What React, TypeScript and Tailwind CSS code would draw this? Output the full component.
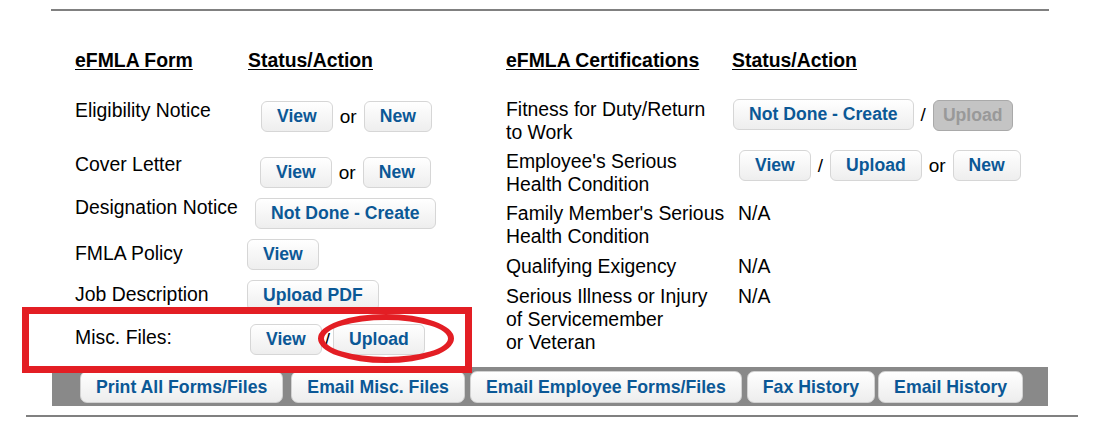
import React from "react";

type Btn = { label: string; disabled?: boolean };

function ActionButton({ label, disabled }: Btn) {
  if (disabled) {
    return (
      <span className="inline-flex h-[31px] items-center rounded-[6px] border border-[#a9a9a9] bg-[#c4c4c4] px-[9px] text-[17.6px] font-bold text-[#999999]">
        {label}
      </span>
    );
  }
  return (
    <span className="inline-flex h-[31px] items-center rounded-[6px] border border-[#d6d6d6] bg-linear-to-b from-white to-[#eeeeee] px-[15px] text-[17.6px] font-bold text-[#0b5896]">
      {label}
    </span>
  );
}

function Sep({ text, tight }: { text: string; tight?: boolean }) {
  return <span className={tight ? "mx-[3px] text-[19px]" : "mx-[7px] text-[19px]"}>{text}</span>;
}

function ToolButton({ label, className }: { label: string; className?: string }) {
  return (
    <span
      className={
        "inline-flex h-[32px] items-center rounded-[7px] border border-[#d2d2d2] bg-linear-to-b from-white to-[#ededed] px-[15px] text-[17.7px] font-bold text-[#0b5896] " +
        (className || "")
      }
    >
      {label}
    </span>
  );
}

export default function App() {
  return (
    <div className="relative h-[423px] w-[1118px] overflow-hidden bg-white font-['Liberation_Sans',Arial,sans-serif] text-black">
      {/* top rule */}
      <div className="ml-[51px] mt-[9px] h-[2px] w-[998px] bg-[#808080]" />

      {/* two tables */}
      <div className="flex h-[356px] pt-[38px] leading-[23px]">
        {/* eFMLA Form */}
        <div className="w-[506px] shrink-0 pl-[75px] text-[19.4px]">
          <div className="flex h-[50px] font-bold underline underline-offset-[2px]">
            <div className="w-[173px]">eFMLA Form</div>
            <div>Status/Action</div>
          </div>

          <div className="flex h-[54px] items-start">
            <div className="w-[172px]">Eligibility Notice</div>
            <div className="ml-[14px] mt-[2px] flex items-center">
              <ActionButton label="View" />
              <Sep text="or" />
              <ActionButton label="New" />
            </div>
          </div>

          <div className="flex h-[43px] items-start">
            <div className="w-[172px]">Cover Letter</div>
            <div className="ml-[13px] mt-[4px] flex items-center">
              <ActionButton label="View" />
              <Sep text="or" />
              <ActionButton label="New" />
            </div>
          </div>

          <div className="flex h-[43px] items-start">
            <div className="w-[172px]">Designation Notice</div>
            <div className="ml-[8px] mt-[2px] flex items-center">
              <ActionButton label="Not Done - Create" />
            </div>
          </div>

          <div className="flex h-[41px] items-start">
            <div className="mt-[3px] w-[172px]">FMLA Policy</div>
            <div className="flex items-center">
              <ActionButton label="View" />
            </div>
          </div>

          <div className="flex h-[44px] items-start">
            <div className="mt-[3px] w-[172px]">Job Description</div>
            <div className="flex items-center">
              <ActionButton label="Upload PDF" />
            </div>
          </div>

          <div className="flex items-start">
            <div className="mt-[2px] w-[172px]">Misc. Files:</div>
            <div className="ml-[3px] flex items-center">
              <ActionButton label="View" />
              <Sep text="/" tight />
              <ActionButton label="Upload" />
            </div>
          </div>
        </div>

        {/* eFMLA Certifications */}
        <div className="text-[19.4px]">
          <div className="flex h-[49px] font-bold underline underline-offset-[2px]">
            <div className="w-[226px]">eFMLA Certifications</div>
            <div>Status/Action</div>
          </div>

          <div className="flex h-[52px] items-start">
            <div className="w-[226px]">
              Fitness for Duty/Return
              <br />
              to Work
            </div>
            <div className="ml-[1px] flex items-center">
              <ActionButton label="Not Done - Create" />
              <Sep text="/" />
              <span className="mt-[2px]">
                <ActionButton label="Upload" disabled />
              </span>
            </div>
          </div>

          <div className="flex h-[52px] items-start">
            <div className="w-[226px]">
              Employee's Serious
              <br />
              Health Condition
            </div>
            <div className="ml-[7px] flex items-center">
              <ActionButton label="View" />
              <Sep text="/" />
              <ActionButton label="Upload" />
              <Sep text="or" />
              <ActionButton label="New" />
            </div>
          </div>

          <div className="flex h-[53px] items-start">
            <div className="w-[226px]">
              Family Member's Serious
              <br />
              Health Condition
            </div>
            <div className="ml-[6px]">N/A</div>
          </div>

          <div className="flex h-[30px] items-start">
            <div className="w-[226px]">Qualifying Exigency</div>
            <div className="ml-[6px]">N/A</div>
          </div>

          <div className="flex items-start">
            <div className="w-[226px]">
              Serious Illness or Injury
              <br />
              of Servicemember
              <br />
              or Veteran
            </div>
            <div className="ml-[6px]">N/A</div>
          </div>
        </div>
      </div>

      {/* toolbar */}
      <div className="ml-[52px] flex h-[39px] w-[996px] items-start bg-[#898989] pl-[28px] pt-[4px]">
        <ToolButton label="Print All Forms/Files" />
        <ToolButton label="Email Misc. Files" className="ml-[8px]" />
        <ToolButton label="Email Employee Forms/Files" className="ml-[5px]" />
        <ToolButton label="Fax History" className="ml-[5px]" />
        <ToolButton label="Email History" className="ml-[3px]" />
      </div>

      {/* bottom rule */}
      <div className="ml-[26px] mt-[9px] h-[2px] w-[1052px] bg-[#808080]" />

      {/* annotation overlays */}
      <div className="absolute left-[22px] top-[307px] h-[66px] w-[450px] border-[7px] border-[#e31e24]" />
      <div className="absolute left-[318px] top-[314px] h-[49px] w-[136px] rounded-[50%] border-[6px] border-[#e31e24]" />
    </div>
  );
}
